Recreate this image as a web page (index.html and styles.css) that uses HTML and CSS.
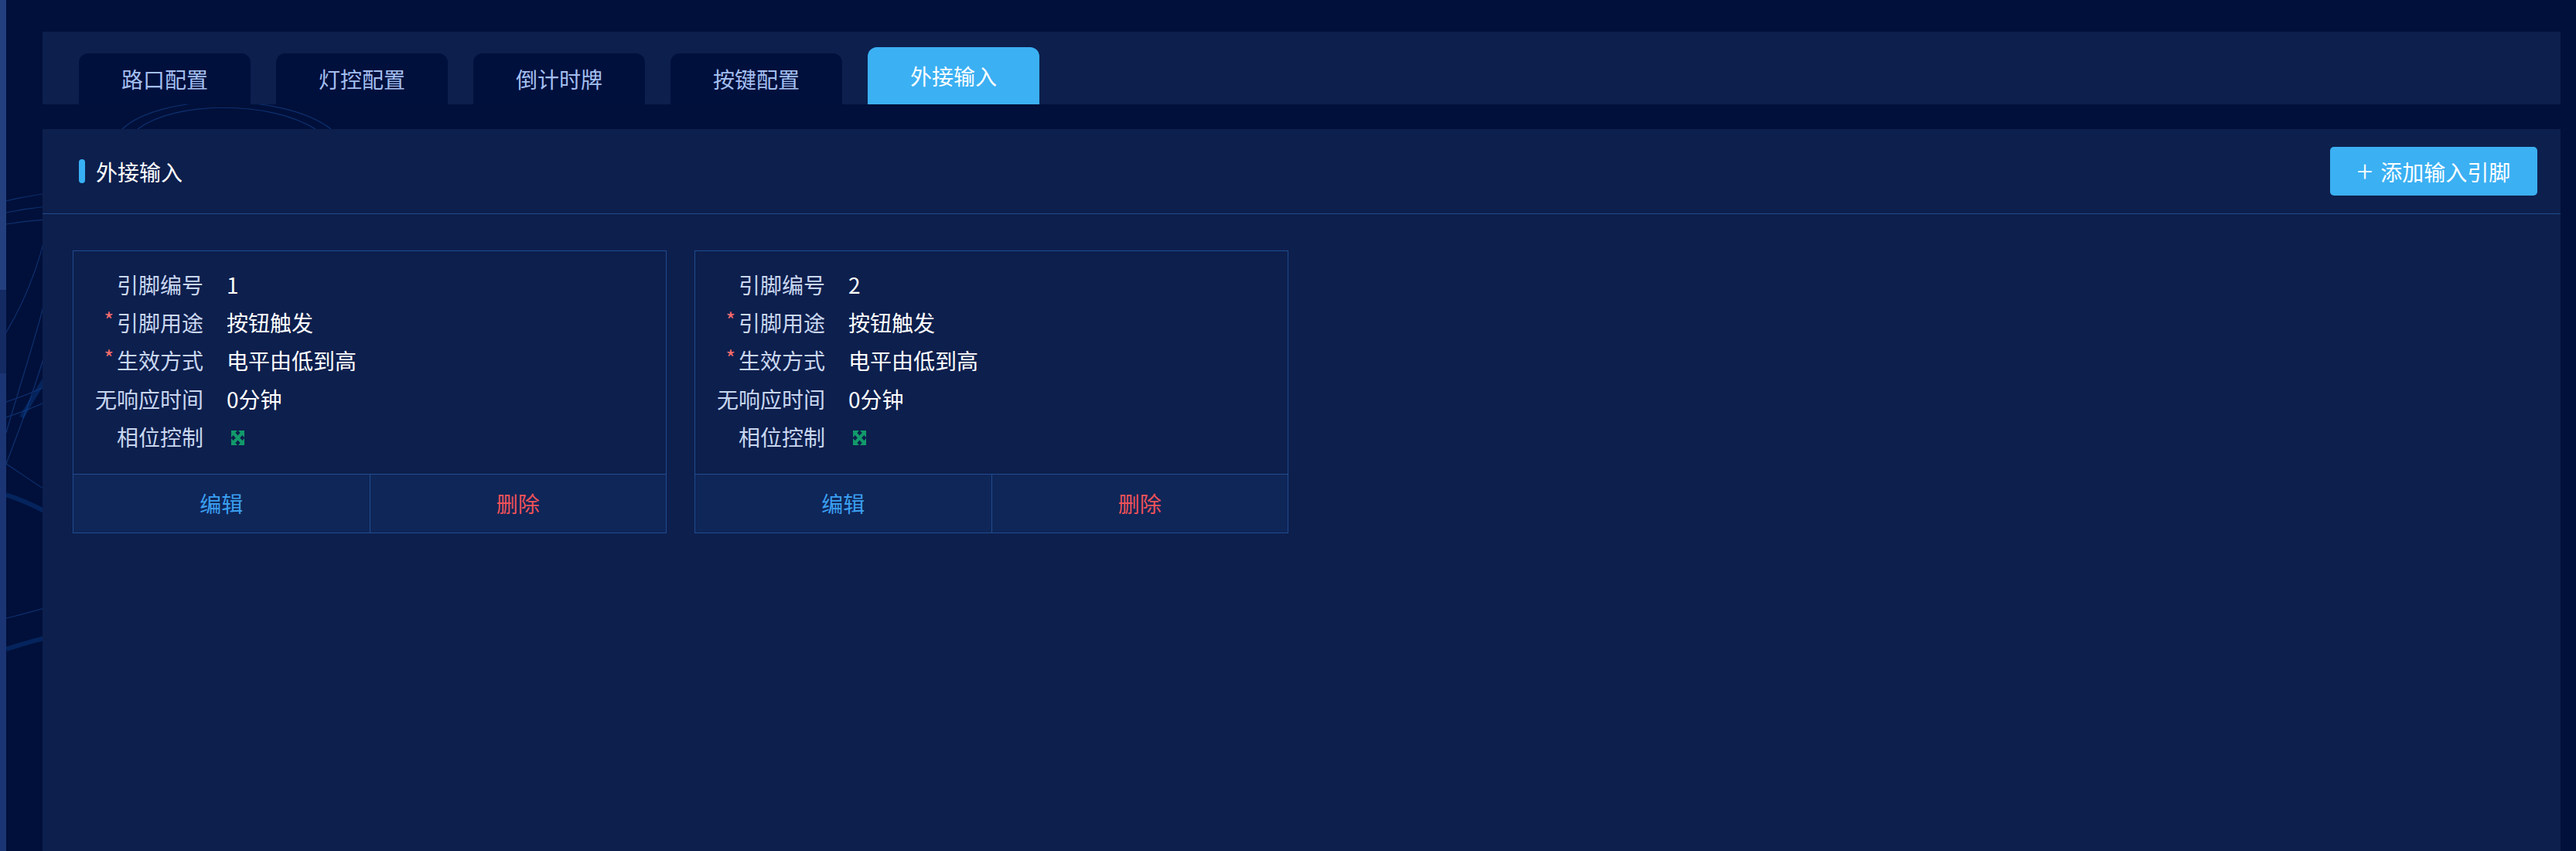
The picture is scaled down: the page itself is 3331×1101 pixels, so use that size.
FILE: index.html
```html
<!DOCTYPE html>
<html lang="zh-CN">
<head>
<meta charset="utf-8">
<title>外接输入</title>
<link rel="stylesheet" href="styles.css">
</head>
<body>
<div class="page">
  <div class="edge">
    <div class="edge-a"></div>
    <div class="edge-b"></div>
    <div class="edge-c"></div>
  </div>
  <svg class="bg-waves" width="440" height="1101" viewBox="0 0 440 1101" aria-hidden="true">
    <g fill="none" stroke="#1b4c9c" stroke-width="1.2" opacity="0.55">
      <path d="M0 260 C 120 230, 260 250, 440 300"/>
      <path d="M0 275 C 120 250, 260 270, 440 320"/>
      <path d="M0 290 C 120 270, 260 290, 440 340"/>
      <path d="M0 560 C 40 420, 90 300, 60 180"/>
      <path d="M0 600 C 50 470, 100 330, 70 200"/>
      <path d="M0 430 C 30 380, 50 320, 60 260"/>
      <path d="M0 520 C 60 500, 120 470, 160 420"/>
      <path d="M0 540 C 60 520, 120 490, 160 440"/>
      <path d="M0 800 C 80 780, 140 760, 200 740"/>
      <path d="M0 600 C 60 640, 110 680, 160 660"/>
      <path d="M150 167 C 200 120, 360 120, 420 167"/>
      <path d="M170 167 C 220 130, 340 130, 400 167"/>
    </g>
    <g fill="none" stroke="#0f4aa0" stroke-width="6" opacity="0.35">
      <path d="M0 640 C 60 660, 120 700, 160 760"/>
      <path d="M0 840 C 60 820, 120 810, 170 800"/>
      <path d="M20 540 C 60 470, 110 400, 160 360"/>
    </g>
  </svg>

  <div class="main">
    <nav class="tabs-bar">
      <div class="tab">路口配置</div>
      <div class="tab">灯控配置</div>
      <div class="tab">倒计时牌</div>
      <div class="tab">按键配置</div>
      <div class="tab tab-active">外接输入</div>
    </nav>

    <section class="content">
      <header class="content-head">
        <div class="head-title">
          <span class="head-bar"></span>
          <span class="head-text">外接输入</span>
        </div>
        <button class="add-btn" type="button"><span class="plus">+</span>添加输入引脚</button>
      </header>

      <div class="cards">
        <div class="card">
          <div class="card-body">
            <div class="row"><span class="label">引脚编号</span><span class="value">1</span></div>
            <div class="row"><span class="label"><span class="req">*</span>引脚用途</span><span class="value">按钮触发</span></div>
            <div class="row"><span class="label"><span class="req">*</span>生效方式</span><span class="value">电平由低到高</span></div>
            <div class="row"><span class="label">无响应时间</span><span class="value">0分钟</span></div>
            <div class="row"><span class="label">相位控制</span><span class="value">
              <svg class="phase-icon" width="17" height="19" viewBox="0 0 16 16" preserveAspectRatio="none">
                <g fill="#129a6a">
                  <path d="M0 0 H7.5 L0 7.5 Z"/>
                  <path d="M16 0 H8.5 L16 7.5 Z"/>
                  <path d="M0 16 H7.5 L0 8.5 Z"/>
                  <path d="M16 16 H8.5 L16 8.5 Z"/>
                </g>
                <g stroke="#129a6a" stroke-width="3.6">
                  <path d="M2.5 2.5 L13.5 13.5"/>
                  <path d="M13.5 2.5 L2.5 13.5"/>
                </g>
              </svg>
            </span></div>
          </div>
          <div class="card-foot">
            <span class="act act-edit">编辑</span>
            <span class="act act-del">删除</span>
          </div>
        </div>

        <div class="card">
          <div class="card-body">
            <div class="row"><span class="label">引脚编号</span><span class="value">2</span></div>
            <div class="row"><span class="label"><span class="req">*</span>引脚用途</span><span class="value">按钮触发</span></div>
            <div class="row"><span class="label"><span class="req">*</span>生效方式</span><span class="value">电平由低到高</span></div>
            <div class="row"><span class="label">无响应时间</span><span class="value">0分钟</span></div>
            <div class="row"><span class="label">相位控制</span><span class="value">
              <svg class="phase-icon" width="17" height="19" viewBox="0 0 16 16" preserveAspectRatio="none">
                <g fill="#129a6a">
                  <path d="M0 0 H7.5 L0 7.5 Z"/>
                  <path d="M16 0 H8.5 L16 7.5 Z"/>
                  <path d="M0 16 H7.5 L0 8.5 Z"/>
                  <path d="M16 16 H8.5 L16 8.5 Z"/>
                </g>
                <g stroke="#129a6a" stroke-width="3.6">
                  <path d="M2.5 2.5 L13.5 13.5"/>
                  <path d="M13.5 2.5 L2.5 13.5"/>
                </g>
              </svg>
            </span></div>
          </div>
          <div class="card-foot">
            <span class="act act-edit">编辑</span>
            <span class="act act-del">删除</span>
          </div>
        </div>
      </div>
    </section>
  </div>
</div>
</body>
</html>
```
FILE: styles.css
```css
* { box-sizing: border-box; }

html, body {
  margin: 0;
  padding: 0;
  height: 100%;
}

body {
  background: #00103a;
  font-family: "Noto Sans CJK SC", "Noto Sans", sans-serif;
  font-size: 28px;
  color: #ffffff;
  overflow: hidden;
}

.page {
  position: relative;
  display: flex;
  height: 1101px;
}

.edge {
  width: 8px;
  display: flex;
  flex-direction: column;
  flex-shrink: 0;
  position: relative;
  z-index: 1;
}
.edge-a { height: 375px; background: #233f7e; }
.edge-b { height: 108px; background: #142a63; }
.edge-c { flex: 1; background: #1b3473; }

.bg-waves {
  position: absolute;
  left: 8px;
  top: 0;
  z-index: 0;
}

.main {
  position: relative;
  z-index: 1;
  flex: 1;
  display: flex;
  flex-direction: column;
  padding: 41px 20px 0 47px;
}

/* tabs */
.tabs-bar {
  height: 94px;
  background: #0d1f4d;
  display: flex;
  align-items: flex-end;
  gap: 33px;
  padding-left: 47px;
  margin-bottom: 32px;
}

.tab {
  width: 222px;
  height: 66px;
  border-radius: 12px 12px 0 0;
  background: #00103d;
  color: #a4bff0;
  display: flex;
  align-items: center;
  justify-content: center;
  line-height: 1;
}

.tab-active {
  height: 74px;
  background: #3bb0f3;
  color: #ffffff;
}

/* content panel */
.content {
  flex: 1;
  background: #0d1f4d;
  display: flex;
  flex-direction: column;
}

.content-head {
  height: 110px;
  border-bottom: 1px solid #1f4a8c;
  display: flex;
  align-items: center;
  justify-content: space-between;
  padding: 0 30px 0 47px;
}

.head-title {
  display: flex;
  align-items: center;
}

.head-bar {
  width: 8px;
  height: 31px;
  border-radius: 4px;
  background: #38b0f5;
  margin-right: 14px;
}

.head-text {
  color: #ffffff;
  line-height: 1;
}

.add-btn {
  width: 268px;
  height: 63px;
  border: none;
  border-radius: 5px;
  background: #3bb0f3;
  color: #ffffff;
  font-family: inherit;
  font-size: 28px;
  display: flex;
  align-items: center;
  justify-content: center;
  padding: 0;
  line-height: 1;
}

.plus {
  font-size: 38px;
  font-weight: 200;
  margin-right: 10px;
  position: relative;
  top: -2px;
}

/* cards */
.cards {
  display: flex;
  gap: 36px;
  padding: 47px 0 0 39px;
  align-items: flex-start;
}

.card {
  width: 768px;
  border: 1px solid #1f4b8e;
  background: #0d1f4d;
}

.card-body {
  padding: 18px 0 23px;
}

.row {
  height: 49.4px;
  display: flex;
  align-items: center;
}

.label {
  width: 168px;
  text-align: right;
  color: #c9d7f0;
  line-height: 1;
}

.req {
  color: #f56c6c;
  margin-right: 4px;
  font-size: 27px;
  position: relative;
  top: -4px;
}

.value {
  margin-left: 30px;
  color: #ffffff;
  line-height: 1;
  display: flex;
  align-items: center;
}

.phase-icon {
  margin-left: 6px;
  margin-top: 2px;
}

.card-foot {
  display: flex;
  height: 76px;
  border-top: 1px solid #1f4b8e;
  background: #0f2658;
}

.act {
  flex: 1;
  display: flex;
  align-items: center;
  justify-content: center;
  line-height: 1;
}

.act-edit {
  color: #3a9ff0;
  border-right: 1px solid #1f4b8e;
}

.act-del {
  color: #ee5259;
}
```
